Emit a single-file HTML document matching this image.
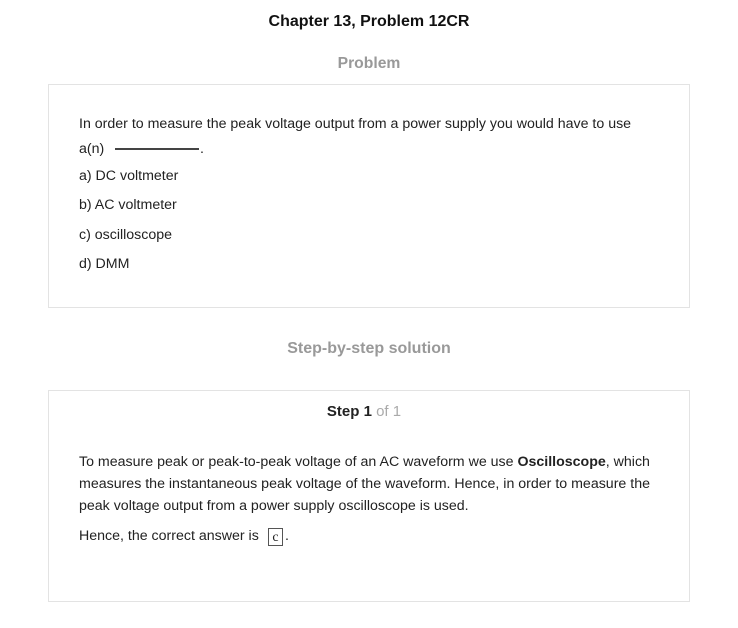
<!DOCTYPE html>
<html><head><style>
body{margin:0;background:#fff;font-family:"Liberation Sans",Arial,sans-serif;color:#222;width:738px;height:628px;overflow:hidden;position:relative}
.a{position:absolute}
.box{position:absolute;border:1px solid #e3e3e3;background:#fff}
p{margin:0;position:absolute;font-size:14.2px;white-space:nowrap}
</style></head><body>
<div class="a" style="left:0;width:738px;top:13px;text-align:center;font-weight:bold;font-size:16px;color:#111">Chapter 13, Problem 12CR</div>
<div class="a" style="left:0;width:738px;top:55px;text-align:center;font-weight:bold;font-size:15.7px;color:#999">Problem</div>
<div class="box" style="left:48px;top:84px;width:640px;height:222px"></div>
<p style="left:79px;top:116px">In order to measure the peak voltage output from a power supply you would have to use</p>
<p style="left:79px;top:141px">a(n)</p>
<div class="a" style="left:115px;top:148px;width:84px;height:2px;background:#444"></div>
<p style="left:200px;top:141px">.</p>
<p style="left:79px;top:168px">a) DC voltmeter</p>
<p style="left:79px;top:197px">b) AC voltmeter</p>
<p style="left:79px;top:227px">c) oscilloscope</p>
<p style="left:79px;top:256px">d) DMM</p>
<div class="a" style="left:0;width:738px;top:340px;text-align:center;font-weight:bold;font-size:16px;color:#999">Step-by-step solution</div>
<div class="box" style="left:48px;top:390px;width:640px;height:210px"></div>
<div class="a" style="left:0;width:728px;top:403px;text-align:center;font-size:15px"><b>Step 1</b> <span style="color:#aaa">of 1</span></div>
<p style="left:79px;top:454px">To measure peak or peak-to-peak voltage of an AC waveform we use <b>Oscilloscope</b>, which</p>
<p style="left:79px;top:476px">measures the instantaneous peak voltage of the waveform. Hence, in order to measure the</p>
<p style="left:79px;top:498px">peak voltage output from a power supply oscilloscope is used.</p>
<p style="left:79px;top:528px">Hence, the correct answer is</p>
<div class="a" style="left:268px;top:528px;width:15px;height:18px;border:1px solid #555;box-sizing:border-box;font-family:'Liberation Serif',serif;font-size:14px;text-align:center;line-height:18px">c</div>
<p style="left:285px;top:528px">.</p>
</body></html>
